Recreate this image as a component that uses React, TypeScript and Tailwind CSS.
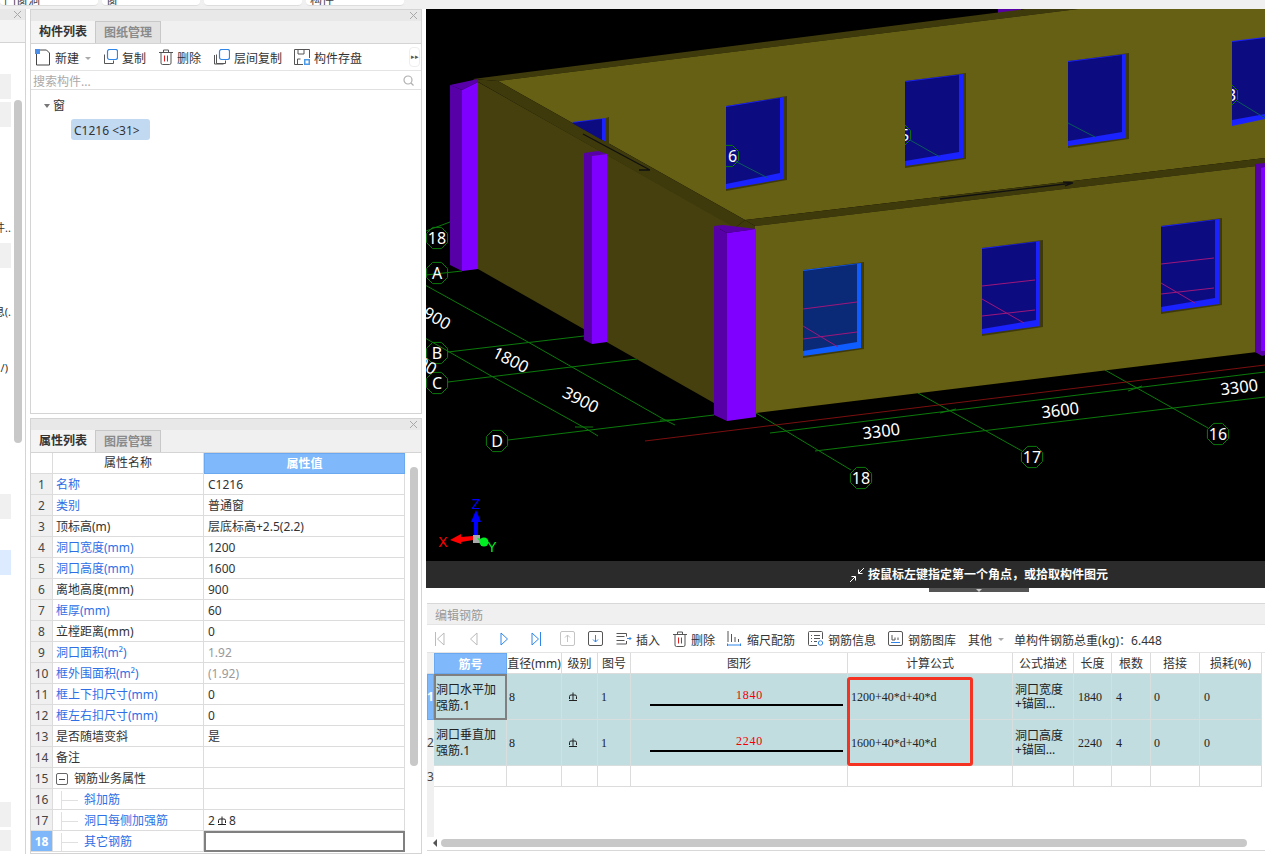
import React from "react";

const attrRows = [
  { n: "1", name: "名称", value: "C1216", blue: true },
  { n: "2", name: "类别", value: "普通窗", blue: true },
  { n: "3", name: "顶标高(m)", value: "层底标高+2.5(2.2)" },
  { n: "4", name: "洞口宽度(mm)", value: "1200", blue: true },
  { n: "5", name: "洞口高度(mm)", value: "1600", blue: true },
  { n: "6", name: "离地高度(mm)", value: "900" },
  { n: "7", name: "框厚(mm)", value: "60", blue: true },
  { n: "8", name: "立樘距离(mm)", value: "0" },
  { n: "9", name: "洞口面积(m²)", value: "1.92", blue: true, muted: true },
  { n: "10", name: "框外围面积(m²)", value: "(1.92)", blue: true, muted: true },
  { n: "11", name: "框上下扣尺寸(mm)", value: "0", blue: true },
  { n: "12", name: "框左右扣尺寸(mm)", value: "0", blue: true },
  { n: "13", name: "是否随墙变斜", value: "是" },
  { n: "14", name: "备注", value: "" },
];

const rebarCols = "grid-cols-[7px_73px_55px_36px_33px_217px_165px_61px_38px_39px_49px_62px_3px]";

function Rebar({ className = "" }: { className?: string }) {
  return (
    <svg width="10" height="10" viewBox="0 0 10 10" className={className} fill="none" stroke="#222" strokeWidth="1">
      <path d="M1.5 7V4.5A1.5 1.5 0 0 1 3 3h4a1.5 1.5 0 0 1 1.5 1.5V7M5 0.5v8M1 8.5h8" />
    </svg>
  );
}

function CloseX() {
  return (
    <svg width="9" height="9" viewBox="0 0 9 9" stroke="#a8a8a8" strokeWidth="1" className="shrink-0">
      <path d="M1 1l7 7M8 1l-7 7" />
    </svg>
  );
}

function Caret() {
  return <span className="block h-0 w-0 border-x-[3px] border-t-[3px] border-x-transparent border-t-[#aaa]" />;
}

function IconNew() {
  return (
    <svg width="16" height="17" viewBox="0 0 16 17" fill="none" stroke="#444">
      <path d="M1.5 5v11h13V4l-3-3H5" />
      <rect x="0" y="0" width="5" height="5" fill="#4b8fe8" stroke="none" />
    </svg>
  );
}

function IconCopy({ layers = false }: { layers?: boolean }) {
  return (
    <svg width="16" height="16" viewBox="0 0 16 16" fill="none" stroke="#555">
      {layers && <path d="M0.5 6v9h9" />}
      <path d="M2.5 5.5h-0v9h9v-3" />
      <rect x="5.5" y="0.5" width="10" height="10" rx="2" stroke="#2f86e8" strokeWidth="1.2" />
    </svg>
  );
}

function IconTrash() {
  return (
    <svg width="14" height="16" viewBox="0 0 14 16" fill="none" stroke="#555">
      <path d="M0 3.5h14M4.5 3V1h5v2M2 3.5V14a1.5 1.5 0 0 0 1.5 1.5h7A1.5 1.5 0 0 0 12 14V3.5" />
      <path d="M5.5 6.5v6M8.5 6.5v6" stroke="#e02020" />
    </svg>
  );
}

function IconSave() {
  return (
    <svg width="16" height="16" viewBox="0 0 16 16" fill="none" stroke="#555">
      <path d="M9 15.5H0.5v-15h15V9M4 1v4h6V1M3.5 15v-5h3" />
      <rect x="10" y="10" width="6" height="6" fill="#4b9be8" stroke="none" />
      <rect x="11.5" y="11.5" width="3" height="3" fill="#fff" stroke="none" />
    </svg>
  );
}

function IconInsert() {
  return (
    <svg width="16" height="12" viewBox="0 0 16 12" fill="none" stroke="#555">
      <path d="M0.5 0.5h10v3M0.5 3.5h8M0.5 7.5h8M0.5 11h10V8" />
      <path d="M11 5.5h4M13.5 4l1.5 1.5L13.5 7" stroke="#2f86e8" />
    </svg>
  );
}

function IconScale() {
  return (
    <svg width="14" height="15" viewBox="0 0 14 15" fill="none" stroke="#555">
      <path d="M1 0v11M4.5 3v8M8 6v5M11.5 8v3" />
      <path d="M0.5 14h13M0.5 12.5v3M13.5 12.5v3" stroke="#2f86e8" />
    </svg>
  );
}

function IconInfo() {
  return (
    <svg width="16" height="15" viewBox="0 0 16 15" fill="none" stroke="#555">
      <path d="M9 14.5H1.5a1 1 0 0 1-1-1v-12a1 1 0 0 1 1-1h12a1 1 0 0 1 1 1V8" />
      <path d="M3 4.5h1M6 4.5h6M3 7.5h1M6 7.5h6M3 10.5h1M6 10.5h3" />
      <circle cx="12.5" cy="12" r="2.2" stroke="#2f86e8" />
    </svg>
  );
}

function IconLibrary() {
  return (
    <svg width="15" height="15" viewBox="0 0 15 15" fill="none" stroke="#555">
      <rect x="0.5" y="0.5" width="14" height="14" rx="1.5" />
      <path d="M4 4v5h3V6.5M10 9V6.5" />
      <path d="M3 11.5h9" stroke="#2f86e8" />
    </svg>
  );
}

function NavIcon({ dir, bar, color }: { dir: "l" | "r"; bar?: boolean; color: string }) {
  return (
    <svg width="10" height="14" viewBox="0 0 10 14" fill="none" stroke={color}>
      {dir === "l" ? <path d="M9 1L2.5 7 9 13z" /> : <path d="M1 1l6.5 6L1 13z" />}
      {bar && (dir === "l" ? <path d="M0.5 0v14" /> : <path d="M9.5 0v14" />)}
    </svg>
  );
}

function BoxArrow({ up, color, arrow }: { up?: boolean; color: string; arrow: string }) {
  return (
    <svg width="15" height="15" viewBox="0 0 15 15" fill="none">
      <rect x="0.5" y="0.5" width="14" height="14" rx="1.5" stroke={color} />
      <path d={up ? "M7.5 11V4M5 6.5l2.5-2.5L10 6.5" : "M7.5 4v7M5 8.5L7.5 11 10 8.5"} stroke={arrow} />
    </svg>
  );
}

function PanelTabs({ active, other }: { active: string; other: string }) {
  return (
    <div className="flex h-[23px] border-b border-[#d4d4d4] bg-[#f0f0f0]">
      <div className="flex w-[65px] items-center justify-center border-r border-[#c8c8c8] bg-[#f4f4f4] text-xs font-bold text-[#333]">
        {active}
      </div>
      <div className="flex w-[65px] items-center justify-center border-r border-t border-[#c8c8c8] bg-[#e2e2e2] text-xs font-bold text-[#8a8a8a]">
        {other}
      </div>
    </div>
  );
}

function TitleBar() {
  return (
    <div className="flex h-[11px] items-center justify-end bg-[#e8e8e8] pr-[3px]">
      <CloseX />
    </div>
  );
}

function Tool({ icon, label, className = "" }: { icon: React.ReactNode; label: string; className?: string }) {
  return (
    <div className={`flex shrink-0 items-center gap-[4px] text-xs text-[#333] ${className}`}>
      {icon}
      <span className="pt-[4px]">{label}</span>
    </div>
  );
}

function Sliver() {
  return (
    <div className="relative w-[26px] shrink-0 border-r border-[#d4d4d4] text-[11px] text-[#333]">
      <div className="flex h-[11px] items-center justify-end bg-[#e8e8e8] pr-[3px]">
        <CloseX />
      </div>
      <div className="h-[23px] border-b border-[#d4d4d4] bg-[#f4f4f4]" />
      <div className="flex flex-col">
        <div className="mt-[31px] h-[25px] w-[11px] bg-[#f0f0f0]" />
        <div className="mt-[3px] h-[25px] w-[11px] bg-[#f0f0f0]" />
        <div className="mt-[94px] flex h-[14px] w-[11px] justify-end overflow-hidden whitespace-nowrap leading-[14px]">
          <span className="shrink-0">构件..</span>
        </div>
        <div className="mt-[8px] h-[25px] w-[11px] bg-[#f0f0f0]" />
        <div className="mt-[37px] flex h-[14px] w-[11px] justify-end overflow-hidden whitespace-nowrap leading-[14px]">
          <span className="shrink-0">信息(.</span>
        </div>
        <div className="mt-[42px] flex h-[14px] w-[8px] justify-end overflow-hidden whitespace-nowrap leading-[14px]">
          <span className="shrink-0">/)</span>
        </div>
        <div className="mt-[119px] h-[25px] w-[11px] bg-[#f0f0f0]" />
        <div className="mt-[31px] h-[25px] w-[11px] bg-[#dcebff]" />
        <div className="mt-[227px] h-[25px] w-[11px] bg-[#f0f0f0]" />
        <div className="mt-[3px] h-[21px] w-[11px] bg-[#f0f0f0]" />
      </div>
      {/* scrollbar over the list */}
      <div className="absolute left-[14px] top-[91px] h-[343px] w-[8px] rounded-full bg-[#c8c8c8]" />
    </div>
  );
}

function ComponentPanel() {
  return (
    <div className="flex h-[405px] flex-col border border-[#d4d4d4] bg-white">
      <TitleBar />
      <PanelTabs active="构件列表" other="图纸管理" />
      <div className="flex h-[27px] items-center border-b border-[#e4e4e4] pl-[4px]">
        <Tool icon={<IconNew />} label="新建" />
        <div className="ml-[6px] mr-[11px] flex pt-[2px]">
          <Caret />
        </div>
        <Tool icon={<IconCopy />} label="复制" className="mr-[13px]" />
        <Tool icon={<IconTrash />} label="删除" className="mr-[13px]" />
        <Tool icon={<IconCopy layers />} label="层间复制" className="mr-[12px]" />
        <Tool icon={<IconSave />} label="构件存盘" />
        <div className="ml-auto mr-px flex h-[20px] w-[11px] items-center justify-center rounded-sm border border-[#eee] text-[7px] text-[#555]">
          ▸▸
        </div>
      </div>
      <div className="flex h-[19px] items-center justify-between border-b border-[#e0e0e0] pl-[2px] pr-[7px] text-xs text-[#aaa]">
        <span className="pt-[4px]">搜索构件...</span>
        <svg width="11" height="11" viewBox="0 0 11 11" fill="none" stroke="#b0b0b0" strokeWidth="1.2">
          <circle cx="5" cy="5" r="4" />
          <path d="M8 8l2.5 2.5" />
        </svg>
      </div>
      <div className="flex-1 pl-[13px] pt-[6px] text-xs text-[#333]">
        <div className="flex h-[20px] items-center gap-[3px]">
          <span className="h-0 w-0 border-x-[3px] border-t-[4px] border-x-transparent border-t-[#777]" />
          <span>窗</span>
        </div>
        <div className="ml-[27px] mt-[3px] flex h-[21px] w-[79px] items-center rounded-[3px] bg-[#c2d9f2] pl-[3px] pt-[2px]">
          C1216 &lt;31&gt;
        </div>
      </div>
    </div>
  );
}

function AttrCell({ n, children, value, selected }: { n: string; children: React.ReactNode; value?: React.ReactNode; selected?: boolean }) {
  return (
    <div className="grid h-[21px] grid-cols-[22px_151px_201px] text-xs">
      <div
        className={`flex items-center justify-center border-b border-r border-[#dcdcdc] pt-[2px] ${
          selected ? "bg-[#7eb8fa] font-bold text-white" : "bg-[#f0f0f0] text-[#444]"
        }`}
      >
        {n}
      </div>
      <div className="flex items-center overflow-hidden whitespace-nowrap border-b border-r border-[#dcdcdc] pl-[3px] pt-[2px]">{children}</div>
      <div
        className={`flex items-center pl-[4px] pt-[2px] text-[#333] ${
          selected ? "border-2 border-[#808080] bg-white" : "border-b border-r border-[#dcdcdc]"
        }`}
      >
        {value}
      </div>
    </div>
  );
}

function TreeTick() {
  return (
    <span className="mr-[2px] flex h-full w-[21px] shrink-0 items-center border-l border-[#e0e0e0]">
      <span className="h-px w-[16px] bg-[#e0e0e0]" />
    </span>
  );
}

function AttrPanel() {
  return (
    <div className="relative mt-[4px] flex flex-1 flex-col overflow-hidden border border-[#d4d4d4] bg-white">
      <TitleBar />
      <PanelTabs active="属性列表" other="图层管理" />
      <div className="grid h-[21px] grid-cols-[22px_151px_201px] text-xs">
        <div className="border-b border-r border-[#dcdcdc]" />
        <div className="flex items-center justify-center border-b border-r border-[#dcdcdc] text-[#333]">属性名称</div>
        <div className="flex items-center justify-center border border-[#6aa9f0] bg-[#7fb8fb] font-bold text-white">属性值</div>
      </div>
      {attrRows.map((r) => (
        <AttrCell key={r.n} n={r.n} value={<span className={r.muted ? "text-[#999]" : ""}>{r.value}</span>}>
          <span className={r.blue ? "text-[#2f6fe6]" : "text-[#333]"}>{r.name}</span>
        </AttrCell>
      ))}
      <AttrCell n="15">
        <span className="mr-[6px] flex h-[12px] w-[12px] items-center justify-center rounded-[2px] border border-[#666]">
          <span className="h-px w-[6px] bg-[#444]" />
        </span>
        <span className="text-[#333]">钢筋业务属性</span>
      </AttrCell>
      <AttrCell n="16">
        <span className="ml-[5px] flex h-full items-center">
          <TreeTick />
          <span className="text-[#2f6fe6]">斜加筋</span>
        </span>
      </AttrCell>
      <AttrCell
        n="17"
        value={
          <span className="flex items-center gap-[2px]">
            2<Rebar />8
          </span>
        }
      >
        <span className="ml-[5px] flex h-full items-center">
          <TreeTick />
          <span className="text-[#2f6fe6]">洞口每侧加强筋</span>
        </span>
      </AttrCell>
      <AttrCell n="18" selected>
        <span className="ml-[5px] flex h-full items-center">
          <TreeTick />
          <span className="text-[#2f6fe6]">其它钢筋</span>
        </span>
      </AttrCell>
      {/* scrollbar over the table */}
      <div className="absolute left-[379px] top-[48px] h-[299px] w-[8px] rounded-full bg-[#c8c8c8]" />
    </div>
  );
}

type WinProps = { x: number; y: number; yr: number; h: number; frame: string; fill: string };

function Win({ x, y, yr, h, frame, fill }: WinProps) {
  const w = 58;
  return (
    <g>
      <polygon points={`${x},${y} ${x + w + 3},${yr - 1} ${x + w + 3},${yr + h} ${x},${y + h + 2}`} fill="#3f3a0c" />
      <polygon points={`${x},${y} ${x + w},${yr} ${x + w},${yr + h - 1} ${x},${y + h}`} fill={frame} />
      <polygon points={`${x},${y + 1} ${x + w - 4},${yr + 1} ${x + w - 4},${yr + h - 7} ${x},${y + h - 5}`} fill={fill} />
    </g>
  );
}

function Bubble({ x, y, t }: { x: number; y: number; t: string }) {
  const pts = Array.from({ length: 8 }, (_, i) => {
    const a = (i * Math.PI) / 4 + Math.PI / 8;
    return `${(x + 11.5 * Math.cos(a)).toFixed(1)},${(y + 11.5 * Math.sin(a)).toFixed(1)}`;
  }).join(" ");
  return (
    <g>
      <polygon points={pts} fill="none" stroke="#0b7a0b" strokeWidth="1" />
      <text x={x} y={y + 6} textAnchor="middle" fill="#fff" fontSize="16" fontFamily="Noto Sans">
        {t}
      </text>
    </g>
  );
}

function DimText({ x, y, r, t }: { x: number; y: number; r: number; t: string }) {
  return (
    <text x={x} y={y} transform={`rotate(${r} ${x} ${y})`} textAnchor="middle" fill="#fff" fontSize="16.5" fontFamily="Noto Sans">
      {t}
    </text>
  );
}

function Scene() {
  const green = "#0b7a0b";
  const gridLines = [
    "426,231 450,222",
    "426,275 462,271",
    "448,352 584,336",
    "448,382 637,359",
    "508,440 714,415",
    "770,433 1265,372",
    "815,451 1265,397",
  ];
  return (
    <svg width="839" height="552" viewBox="426 9 839 552" className="block">
      <defs>
        <clipPath id="w2"><rect x="726" y="100" width="56" height="82" /></clipPath>
        <clipPath id="w3"><rect x="905" y="78" width="56" height="82" /></clipPath>
        <clipPath id="w5"><rect x="1232" y="40" width="33" height="82" /></clipPath>
      </defs>
      <rect x="426" y="9" width="839" height="552" fill="#000" />

      {gridLines.map((p) => (
        <polyline key={p} points={p} fill="none" stroke={green} strokeWidth="1" />
      ))}
      <polyline points="425,285 528,342 665,420 675,425" fill="none" stroke={green} />
      <polyline points="425,338 493,377 585,428 598,436" fill="none" stroke={green} />
      <polyline points="756,413 851,470" fill="none" stroke={green} />
      <polyline points="918,393 1022,451" fill="none" stroke={green} />
      <polyline points="1105,370 1208,428" fill="none" stroke={green} />
      <line x1="645" y1="441" x2="1265" y2="365" stroke="#7a0f0f" />
      <path d="M575 427h18M660 420h15M940 413l16-4M1128 391l14-5" stroke={green} />

      <Bubble x={437} y={238} t="18" />
      <Bubble x={437} y={273} t="A" />
      <Bubble x={437} y={353} t="B" />
      <Bubble x={437} y={383} t="C" />
      <Bubble x={497} y={441} t="D" />
      <Bubble x={861} y={478} t="18" />
      <Bubble x={1032} y={457} t="17" />
      <Bubble x={1218} y={434} t="16" />
      <DimText x={430} y={321} r={30} t="3900" />
      <DimText x={416} y={366} r={30} t="3600" />
      <DimText x={508} y={365} r={27} t="1800" />
      <DimText x={578} y={405} r={27} t="3900" />
      <DimText x={882} y={437} r={-7} t="3300" />
      <DimText x={1061} y={416} r={-7} t="3600" />
      <DimText x={1240} y={393} r={-7} t="3300" />

      {/* back wing, only a column top shows above the wall */}
      <polygon points="998,9 1021,9 1021,12 998,14" fill="#5800a8" />

      {/* top bands */}
      <polygon points="473,79 1025,9 1078,9 498,81" fill="#3f3a0c" />
      <polygon points="498,81 1078,9 1265,9 1265,158 745,220" fill="#666014" />
      <polygon points="478,82 735,227 714,230 714,403 478,269" fill="#45400e" />
      <polygon points="473,79 498,81 745,220 735,228" fill="#3f3a0c" />
      <polygon points="745,220 1265,158 1265,165 755,226" fill="#3f3a0c" />
      <polygon points="735,228 745,220 755,226 756,230" fill="#3f3a0c" />
      <polygon points="755,226 1265,165 1265,351 756,413" fill="#666014" />

      <polygon points="606,118 609,117 609,147 606,143" fill="#3f3a0c" />
      <polygon points="572,122 606,118 606,142" fill="#1a22ff" />
      <polygon points="572,123 602,119 602,140" fill="#0c0c80" />

      <Win x={726} y={106} yr={97} h={83} frame="#1a22ff" fill="#0c0c80" />
      <Win x={905} y={81} yr={74} h={85} frame="#1a22ff" fill="#0c0c80" />
      <Win x={1068} y={61} yr={54} h={85} frame="#1a22ff" fill="#0c0c80" />
      <polygon points="1232,41 1265,37 1265,119 1232,126" fill="#1a22ff" />
      <polygon points="1232,42 1265,38 1265,114 1232,120" fill="#0c0c80" />

      <Win x={803} y={270} yr={263} h={86} frame="#0f5cff" fill="#0a2a78" />
      <Win x={982} y={248} yr={241} h={86} frame="#1a22ff" fill="#0c0c80" />
      <Win x={1161} y={226} yr={219} h={86} frame="#1a22ff" fill="#0c0c80" />

      {/* grid seen through the upper windows */}
      <g clipPath="url(#w2)">
        <Bubble x={728} y={156} t="16" />
        <line x1="735" y1="161" x2="768" y2="178" stroke="#0a5a5a" />
      </g>
      <g clipPath="url(#w3)">
        <Bubble x={900} y={135} t="15" />
        <line x1="910" y1="140" x2="940" y2="157" stroke="#0a5a5a" />
      </g>
      <line x1="1068" y1="123" x2="1095" y2="137" stroke="#0a5a5a" />
      <g clipPath="url(#w5)">
        <Bubble x={1227} y={95} t="13" />
        <line x1="1237" y1="101" x2="1265" y2="118" stroke="#0a5a5a" />
      </g>

      <g stroke="#a0167a" fill="none">
        <path d="M803 309L857 302M803 339L857 332M803 326L838 347" />
        <path d="M982 286L1035 280M982 316L1035 310M982 299L1024 323" />
        <path d="M1161 264L1214 258M1161 294L1214 288M1161 283L1195 303" />
      </g>

      {/* columns */}
      <polygon points="450,85 478,79 478,82 462,90" fill="#5800a8" />
      <polygon points="450,85 462,90 462,271 450,265" fill="#5800a8" />
      <polygon points="462,90 478,82 478,269 462,271" fill="#8000ff" />
      <polygon points="584,153 598,151 607,154 592,156" fill="#5800a8" />
      <polygon points="584,153 592,156 592,344 584,340" fill="#5800a8" />
      <polygon points="592,156 607,154 607,342 592,344" fill="#8000ff" />
      <polygon points="714,226 723,225 756,229 727,233" fill="#5800a8" />
      <polygon points="714,226 727,233 727,421 714,415" fill="#5800a8" />
      <polygon points="727,233 756,229 756,417 727,421" fill="#8000ff" />
      <polygon points="1255,164 1265,163 1265,355 1262,356 1255,352" fill="#5800a8" />
      <polygon points="1261,168 1265,167 1265,351 1261,351" fill="#8000ff" />

      {/* wall direction arrows */}
      <path d="M583 134L650 170M639 170l11 0" stroke="#111" strokeWidth="1.3" fill="none" />
      <path d="M940 199L1073 183M1063 182l10 1-8 3" stroke="#111" strokeWidth="1.3" fill="none" />

      {/* axis marker */}
      <text x="476" y="509" textAnchor="middle" fill="#0000ff" fontSize="14" fontFamily="Liberation Sans">Z</text>
      <polygon points="476,510 481,522 478,522 478,535 474,535 474,522 471,522" fill="#0000ff" />
      <polygon points="450,540 461,534 461,537 473,536 473,540 461,542 461,544" fill="#ff0000" />
      <rect x="473" y="535" width="7" height="8" fill="#aaa" />
      <path d="M477 538l5 1 2 3-3 1z" fill="#00ee22" />
      <ellipse cx="484" cy="542" rx="4.5" ry="4.5" fill="#00ee22" />
      <text x="443" y="547" textAnchor="middle" fill="#ff0000" fontSize="14" fontFamily="Liberation Sans">X</text>
      <text x="492" y="552" textAnchor="middle" fill="#00ee22" fontSize="14" fontFamily="Liberation Sans">Y</text>
    </svg>
  );
}

function RebarRow({ n, name, active, d, len, text, formula, desc }: { n: string; name: string; active?: boolean; d: string; len: string; text: string; formula: string; desc: string }) {
  const cell = "flex items-center border-b border-r border-[#d8dede]";
  const serif = "font-['Liberation_Serif',serif] text-xs";
  return (
    <div className={`grid h-[46px] ${rebarCols} bg-[#c1dde0] text-[#222]`}>
      <div className={`flex items-center justify-center text-xs ${active ? "border border-[#6aa9f0] bg-[#7fb8fb] font-bold text-white" : "bg-[#f0f0f0] text-[#444]"}`}>{n}</div>
      <div className={`flex items-center pt-px text-xs leading-[16px] ${active ? "border-2 border-[#808080]" : "border-b border-r border-[#d8dede] pl-[2px]"}`}>{name}</div>
      <div className={`${cell} ${serif} pl-[2px]`}>{d}</div>
      <div className={`${cell} pl-[6px]`}>
        <Rebar />
      </div>
      <div className={`${cell} ${serif} pl-[3px]`}>1</div>
      <div className={`${cell} flex-col items-start justify-center pl-[19px]`}>
        <span className={`${serif} w-[193px] pl-[6px] text-center tracking-[0.7px] text-[#f00000]`}>{text}</span>
        <span className="mt-px h-[2px] w-[193px] bg-black" />
      </div>
      <div className={`${cell} ${serif} pl-[3px]`}>{formula}</div>
      <div className="flex items-center border-b border-r border-[#d8dede] pl-[2px] text-xs leading-[14px]">
        <span>
          {desc}
          <br />
          +锚固…
        </span>
      </div>
      <div className={`${cell} ${serif} pl-[4px]`}>{len}</div>
      <div className={`${cell} ${serif} pl-[4px]`}>4</div>
      <div className={`${cell} ${serif} pl-[3px]`}>0</div>
      <div className={`${cell} ${serif} pl-[4px]`}>0</div>
      <div className="bg-white" />
    </div>
  );
}

function RebarPanel() {
  const head = ["筋号", "直径(mm)", "级别", "图号", "图形", "计算公式", "公式描述", "长度", "根数", "搭接", "损耗(%)"];
  return (
    <div className="relative ml-px mt-[11px] h-[248px] border-y border-[#d8d8d8] bg-white">
      <div className="flex h-[21px] items-center border-b border-[#e4e4e4] bg-[#f0f0f0] pl-[8px] pt-[3px] text-xs text-[#999]">编辑钢筋</div>
      <div className="flex h-[28px] items-center border-b border-[#e4e4e4] pl-[8px]">
        <NavIcon dir="l" bar color="#bbb" />
        <div className="ml-[23px]"><NavIcon dir="l" color="#bbb" /></div>
        <div className="ml-[22px]"><NavIcon dir="r" color="#2f86e8" /></div>
        <div className="ml-[21px]"><NavIcon dir="r" bar color="#2f86e8" /></div>
        <div className="ml-[19px]"><BoxArrow up color="#c4c4c4" arrow="#c4c4c4" /></div>
        <div className="ml-[13px]"><BoxArrow color="#555" arrow="#2f86e8" /></div>
        <Tool icon={<IconInsert />} label="插入" className="ml-[13px]" />
        <Tool icon={<IconTrash />} label="删除" className="ml-[13px]" />
        <Tool icon={<IconScale />} label="缩尺配筋" className="ml-[12px] gap-[6px]" />
        <Tool icon={<IconInfo />} label="钢筋信息" className="ml-[13px]" />
        <Tool icon={<IconLibrary />} label="钢筋图库" className="ml-[12px] gap-[5px]" />
        <span className="ml-[12px] pt-[4px] text-xs text-[#333]">其他</span>
        <div className="ml-[6px] mr-[10px] flex pt-[2px]"><Caret /></div>
        <span className="whitespace-nowrap pt-[4px] text-xs text-[#333]">单构件钢筋总重(kg)：6.448</span>
      </div>
      <div className={`grid h-[21px] ${rebarCols} text-xs text-[#333]`}>
        <div className="border-b border-[#dcdcdc] bg-[#f0f0f0]" />
        {head.map((h, i) => (
          <div
            key={h}
            className={
              i === 0
                ? "flex items-center justify-center border border-[#6aa9f0] bg-[#7fb8fb] pt-[2px] font-bold text-white"
                : "flex items-center justify-center whitespace-nowrap border-b border-r border-[#dcdcdc] pt-[2px]"
            }
          >
            {h}
          </div>
        ))}
      </div>
      <RebarRow n="1" name="洞口水平加强筋.1" active d="8" len="1840" text="1840" formula="1200+40*d+40*d" desc="洞口宽度" />
      <RebarRow n="2" name="洞口垂直加强筋.1" d="8" len="2240" text="2240" formula="1600+40*d+40*d" desc="洞口高度" />
      <div className={`grid h-[21px] ${rebarCols} text-xs text-[#444]`}>
        <div className="flex items-center justify-center bg-[#f0f0f0]">3</div>
        {head.map((h) => (
          <div key={h} className="border-b border-r border-[#dcdcdc]" />
        ))}
      </div>
      <div className="h-[50px] w-[7px] bg-[#f0f0f0]" />
      <div className="flex h-[12px] items-center pl-[6px]">
        <span className="h-0 w-0 border-y-[4px] border-r-[4px] border-y-transparent border-r-[#555]" />
        <span className="ml-[4px] h-[8px] w-[806px] rounded-full bg-[#c8c8c8]" />
      </div>
      {/* red callout on the screenshot */}
      <div className="absolute left-[420px] top-[73px] h-[89px] w-[126px] rounded-[3px] border-[3px] border-[#f53322]" />
    </div>
  );
}

export default function App() {
  return (
    <div className="h-[854px] w-[1265px] overflow-hidden bg-white font-['Noto_Sans','Noto_Sans_CJK_SC',sans-serif]">
      <div className="flex h-[9px] gap-[4px] bg-[#f0f0f0]">
        {["门窗洞", "窗", "", "构件"].map((t, i) => (
          <div key={i} className="h-[6px] w-[98px] overflow-hidden rounded-b-[4px] border-b border-[#ddd] bg-white pl-[4px] text-xs leading-[2px] text-[#444]">
            {t}
          </div>
        ))}
      </div>
      <div className="flex h-[845px]">
        <Sliver />
        <div className="ml-[4px] flex w-[392px] shrink-0 flex-col">
          <ComponentPanel />
          <AttrPanel />
        </div>
        <div className="ml-[4px] flex w-[839px] shrink-0 flex-col">
          <Scene />
          <div className="relative flex h-[27px] items-center bg-[#2b2b2b] pl-[423px] text-xs font-bold text-white">
            <svg width="16" height="16" viewBox="0 0 16 16" fill="none" stroke="#fff" className="mr-[3px]">
              <path d="M15 1L9.5 6.5M9.5 2.5v4h4M1 15l5.5-5.5M6.5 13.5v-4h-4" />
            </svg>
            按鼠标左键指定第一个角点，或拾取构件图元
          </div>
          <div className="ml-[503px] flex h-[4px] w-[100px] items-center justify-center bg-[#555]">
            <span className="h-0 w-0 border-x-[3px] border-t-[3px] border-x-transparent border-t-[#ccc]" />
          </div>
          <RebarPanel />
        </div>
      </div>
    </div>
  );
}
